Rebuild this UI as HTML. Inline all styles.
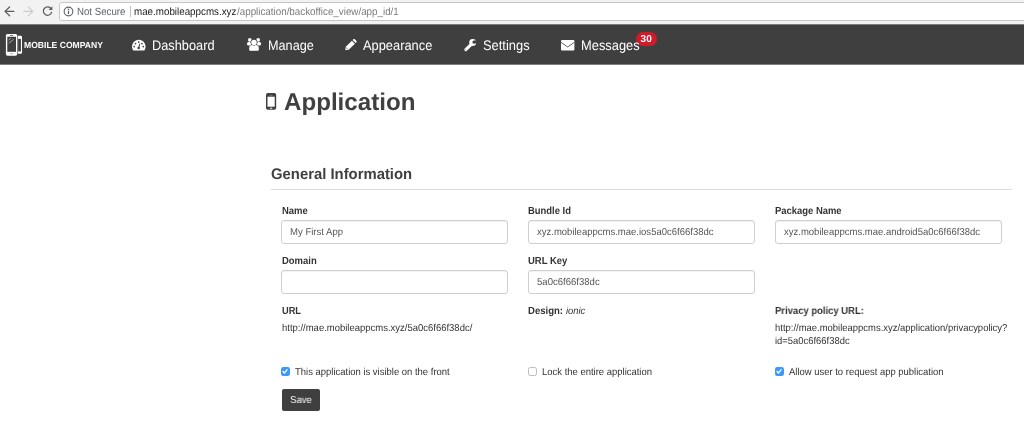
<!DOCTYPE html>
<html><head><meta charset="utf-8"><title>Application</title>
<style>
*{box-sizing:border-box;margin:0;padding:0}
html,body{width:1024px;height:435px;overflow:hidden;background:#fff;font-family:"Liberation Sans",sans-serif;color:#333}
.x{text-rendering:geometricPrecision;position:absolute;white-space:nowrap;line-height:1;transform-origin:0 0;font-family:"Liberation Sans",sans-serif}
#chrome{position:absolute;left:0;top:0;width:1024px;height:25px;background:#f2f2f2;border-bottom:1px solid #7c7c7c}
#urlbox{position:absolute;left:59px;top:2px;width:980px;height:18.500px;background:#fff;border:1px solid #c6c6c6;border-radius:3px}
#nav{position:absolute;left:0;top:25px;width:1024px;height:40px;background:#3f3f3f;border-bottom:1px solid #7e7e7e}
.badge{position:absolute;left:636.200px;top:31.800px;width:20.400px;height:14.100px;border-radius:7.050px;background:#cf1b2b}
#hr{position:absolute;left:271px;top:189px;width:741px;height:1px;background:#dcdcdc}
.inp{position:absolute;width:227px;height:24px;border:1px solid #cfcfcf;border-radius:3px;background:#fff;box-shadow:inset 0 1px 1px rgba(0,0,0,.06)}
.cb{position:absolute;width:8.600px;height:8.600px;border-radius:2.300px;top:367px}
.cb.on{background:#3b99fb}
.cb.off{background:#fff;border:1px solid #bcbcbc}
#save{position:absolute;left:282px;top:388.900px;width:38px;height:21.700px;border-radius:2px;background:#3f3f3f}
svg{position:absolute;overflow:visible}
#all{position:absolute;left:0;top:0;width:1024px;height:435px;will-change:transform;overflow:hidden}
</style></head><body><div id="all">
<div id="chrome"><div id="urlbox"></div></div>
<svg style="left:0;top:0" width="60" height="24" viewBox="0 0 60 24" fill="none" stroke-linecap="round" stroke-linejoin="round">
<path d="M13.800 11.400H5.200M9.600 7L5 11.400L9.600 15.800" stroke="#5c5c5c" stroke-width="1.250"/>
<path d="M23.800 11.400H32.600M28.200 7L32.800 11.400L28.200 15.800" stroke="#cbcbcb" stroke-width="1.150"/>
<path d="M51 8.600A4.200 4.200 0 1 0 51.600 12.300" stroke="#5c5c5c" stroke-width="1.250"/>
<path d="M52.300 6.300V9.900H48.700Z" fill="#5c5c5c" stroke="none"/>
</svg>
<svg style="left:63.400px;top:5.900px" width="11" height="11" viewBox="0 0 11 11"><circle cx="5.500" cy="5.500" r="4.350" fill="none" stroke="#5f6368" stroke-width="1.100"/><rect x="4.850" y="4.700" width="1.300" height="3.400" fill="#5f6368"/><rect x="4.850" y="2.700" width="1.300" height="1.300" fill="#5f6368"/></svg>
<div style="position:absolute;left:130px;top:6px;width:1px;height:11px;background:#c4c4c4"></div>
<div id="nav"></div>
<svg style="left:0;top:28px" width="30" height="34" viewBox="0 28 30 34">
<rect x="13" y="35.800" width="9" height="18" rx="1.300" fill="#fff"/>
<rect x="18.100" y="38.900" width="2.800" height="12.500" fill="#3f3f3f"/>
<rect x="5.300" y="33.300" width="12.500" height="23" rx="2" fill="#3f3f3f"/>
<rect x="5.900" y="33.900" width="11.300" height="21.800" rx="1.600" fill="#fff"/>
<rect x="7.300" y="36.750" width="8.700" height="15.050" fill="#3f3f3f"/>
<rect x="9.800" y="35.200" width="3.500" height="0.700" rx="0.300" fill="#555"/>
<rect x="10.200" y="53" width="2.700" height="1.200" rx="0.500" fill="#bbb"/>
<path d="M8.600 40.100L10.900 38.200M8.750 43.200L13.700 39.300" stroke="#fff" stroke-width="0.550" fill="none"/>
</svg>
<svg style="left:132.100px;top:39.800px" width="13.600" height="10.400" viewBox="0 0 13.600 10.400"><path d="M1.500 10.400A0.700 0.700 0 0 1 0.900 10A6.800 6.800 0 1 1 12.700 10A0.700 0.700 0 0 1 12.100 10.400Z" fill="#fff"/><circle cx="2.200" cy="6.600" r="0.850" fill="#3f3f3f"/><circle cx="3.500" cy="3.600" r="0.850" fill="#3f3f3f"/><circle cx="6.700" cy="2.100" r="0.850" fill="#3f3f3f"/><circle cx="10" cy="3.600" r="0.850" fill="#3f3f3f"/><circle cx="11.300" cy="6.600" r="0.850" fill="#3f3f3f"/><path d="M7.700 4.100L6.800 7.800" stroke="#3f3f3f" stroke-width="1" stroke-linecap="round"/><circle cx="6.650" cy="7.950" r="1.200" fill="#3f3f3f"/></svg>
<svg style="left:246.600px;top:38.300px" width="14.100" height="12.900" viewBox="0 0 14.100 12.900" fill="#fff"><circle cx="2.800" cy="1.850" r="1.850"/><circle cx="11.200" cy="1.850" r="1.850"/><rect x="0" y="3.900" width="4.200" height="3.700" rx="1.600"/><rect x="9.900" y="3.900" width="4.200" height="3.700" rx="1.600"/><circle cx="7" cy="4.550" r="3.350" fill="#3f3f3f"/><path d="M2 11.400V10.100A3.300 3.300 0 0 1 5.300 6.800H8.700A3.300 3.300 0 0 1 12 10.100V11.400A1.500 1.500 0 0 1 10.500 12.900H3.500A1.500 1.500 0 0 1 2 11.400Z" stroke="#3f3f3f" stroke-width="0.350"/><circle cx="7" cy="4.450" r="3.050" fill="#3f3f3f"/><circle cx="7" cy="4.450" r="2.750"/></svg>
<svg style="left:344.800px;top:39.100px" width="11.700" height="11.300" viewBox="0 0 11.700 11.300" fill="#fff"><path d="M0.150 11.250L0.800 7.800L6.900 1.700L9.900 4.700L3.700 10.700Z"/><path d="M7.550 1.050L8.300 0.350A1.100 1.100 0 0 1 9.850 0.350L11.350 1.850A1.100 1.100 0 0 1 11.350 3.400L10.600 4.100Z"/><path d="M1.300 8.500L2.900 10.100" stroke="#3f3f3f" stroke-width="0.500"/><path d="M0.700 10.700L1.600 9.800" stroke="#3f3f3f" stroke-width="0.600"/></svg>
<svg style="left:464.100px;top:38.800px" width="12.100" height="12.400" viewBox="0 0 12.100 12.400"><path d="M7.800 4.900L1.800 10.700" stroke="#fff" stroke-width="3" stroke-linecap="round"/><circle cx="8.700" cy="3.550" r="3.450" fill="#fff"/><circle cx="10" cy="3.100" r="1.600" fill="#3f3f3f"/><path d="M10 3.100L14 2.300" stroke="#3f3f3f" stroke-width="2.900"/><circle cx="1.800" cy="10.700" r="0.450" fill="#3f3f3f"/></svg>
<svg style="left:560.800px;top:39.800px" width="13.400" height="10.600" viewBox="0 0 13.400 10.600"><rect x="0" y="0" width="13.400" height="10.600" rx="1.100" fill="#fff"/><path d="M0 2.300L6.700 7L13.400 2.300" stroke="#3f3f3f" stroke-width="0.800" fill="none"/></svg>
<div class="badge"></div>
<span class="x" style="left:640.400px;top:35.400px;font-size:10px;font-weight:bold;color:#fff;letter-spacing:0.200px">30</span>
<svg style="left:266px;top:93.300px" width="10.200" height="16.700" viewBox="0 0 10.200 16.700"><rect x="0" y="0" width="10.200" height="16.700" rx="1.900" fill="#404040"/><rect x="1.500" y="3.700" width="7.200" height="10" fill="#fff"/><rect x="3.800" y="1.900" width="2.600" height="0.600" fill="#9a9a9a"/><rect x="3.900" y="14.700" width="2.400" height="1.100" rx="0.500" fill="#fff"/></svg>
<div id="hr"></div>
<div class="inp" style="left:281px;top:220px"></div>
<div class="inp" style="left:528px;top:220px"></div>
<div class="inp" style="left:775px;top:220px"></div>
<div class="inp" style="left:281px;top:270px"></div>
<div class="inp" style="left:528px;top:270px"></div>
<div class="cb on" style="left:281.150px"></div>
<div class="cb off" style="left:528.050px"></div>
<div class="cb on" style="left:775.150px"></div>
<svg style="left:281.150px;top:367px" width="8.600" height="8.600" viewBox="0 0 8.600 8.600" fill="none" stroke="#fff" stroke-width="1.350" stroke-linecap="round" stroke-linejoin="round"><path d="M2.050 4.500L3.400 6L6.150 2.650"/></svg>
<svg style="left:775.150px;top:367px" width="8.600" height="8.600" viewBox="0 0 8.600 8.600" fill="none" stroke="#fff" stroke-width="1.350" stroke-linecap="round" stroke-linejoin="round"><path d="M2.050 4.500L3.400 6L6.150 2.650"/></svg>
<div id="save"></div>
<span class="x" style="left:77.35px;top:6.91px;font-size:10.5px;font-weight:normal;color:#5f6368;font-style:normal;transform:scaleX(0.9214)">Not Secure</span>
<span class="x" style="left:134.35px;top:6.91px;font-size:10.5px;font-weight:normal;color:#1a1a1a;font-style:normal;transform:scaleX(0.9333)">mae.mobileappcms.xyz</span>
<span class="x" style="left:236.75px;top:6.91px;font-size:10.5px;font-weight:normal;color:#7a7a7a;font-style:normal;transform:scaleX(0.9342)">/application/backoffice_view/app_id/1</span>
<span class="x" style="left:24.45px;top:40.75px;font-size:8.8px;font-weight:bold;color:#fff;font-style:normal;transform:scaleX(0.9745)">MOBILE COMPANY</span>
<span class="x" style="left:152.25px;top:38.93px;font-size:13.9px;font-weight:normal;color:#fff;font-style:normal;transform:scaleX(0.9195)">Dashboard</span>
<span class="x" style="left:267.55px;top:38.93px;font-size:13.9px;font-weight:normal;color:#fff;font-style:normal;transform:scaleX(0.9123)">Manage</span>
<span class="x" style="left:363.15px;top:38.93px;font-size:13.9px;font-weight:normal;color:#fff;font-style:normal;transform:scaleX(0.9250)">Appearance</span>
<span class="x" style="left:483.05px;top:38.93px;font-size:13.9px;font-weight:normal;color:#fff;font-style:normal;transform:scaleX(0.9282)">Settings</span>
<span class="x" style="left:581.00px;top:38.93px;font-size:13.9px;font-weight:normal;color:#fff;font-style:normal;transform:scaleX(0.9264)">Messages</span>
<span class="x" style="left:283.55px;top:90.93px;font-size:24.3px;font-weight:bold;color:#404040;font-style:normal;transform:scaleX(0.9933)">Application</span>
<span class="x" style="left:271.15px;top:167.05px;font-size:15.3px;font-weight:bold;color:#404040;font-style:normal;transform:scaleX(0.9708)">General Information</span>
<span class="x" style="left:281.75px;top:207.28px;font-size:10.3px;font-weight:bold;color:#333;font-style:normal;transform:scaleX(0.9199)">Name</span>
<span class="x" style="left:528.45px;top:207.28px;font-size:10.3px;font-weight:bold;color:#333;font-style:normal;transform:scaleX(0.9146)">Bundle Id</span>
<span class="x" style="left:775.15px;top:207.28px;font-size:10.3px;font-weight:bold;color:#333;font-style:normal;transform:scaleX(0.9161)">Package Name</span>
<span class="x" style="left:281.55px;top:257.28px;font-size:10.3px;font-weight:bold;color:#333;font-style:normal;transform:scaleX(0.9188)">Domain</span>
<span class="x" style="left:528.45px;top:257.28px;font-size:10.3px;font-weight:bold;color:#333;font-style:normal;transform:scaleX(0.9196)">URL Key</span>
<span class="x" style="left:281.75px;top:307.28px;font-size:10.3px;font-weight:bold;color:#333;font-style:normal;transform:scaleX(0.8974)">URL</span>
<span class="x" style="left:528.25px;top:307.28px;font-size:10.3px;font-weight:bold;color:#333;font-style:normal;transform:scaleX(0.9268)">Design:</span>
<span class="x" style="left:566.25px;top:306.54px;font-size:10px;font-weight:normal;color:#333;font-style:italic;transform:scaleX(0.9379)">ionic</span>
<span class="x" style="left:775.15px;top:307.28px;font-size:10.3px;font-weight:bold;color:#333;font-style:normal;transform:scaleX(0.9192)">Privacy policy URL:</span>
<span class="x" style="left:290.45px;top:228.23px;font-size:10px;font-weight:normal;color:#555;font-style:normal;transform:scaleX(0.9554)">My First App</span>
<span class="x" style="left:536.55px;top:228.23px;font-size:10px;font-weight:normal;color:#555;font-style:normal;transform:scaleX(0.9507)">xyz.mobileappcms.mae.ios5a0c6f66f38dc</span>
<span class="x" style="left:783.55px;top:228.23px;font-size:10px;font-weight:normal;color:#555;font-style:normal;transform:scaleX(0.9504)">xyz.mobileappcms.mae.android5a0c6f66f38dc</span>
<span class="x" style="left:536.55px;top:278.34px;font-size:10px;font-weight:normal;color:#555;font-style:normal;transform:scaleX(0.9554)">5a0c6f66f38dc</span>
<span class="x" style="left:281.75px;top:324.34px;font-size:10px;font-weight:normal;color:#333;font-style:normal;transform:scaleX(0.9483)">http://mae.mobileappcms.xyz/5a0c6f66f38dc/</span>
<span class="x" style="left:775.15px;top:324.34px;font-size:10px;font-weight:normal;color:#333;font-style:normal;transform:scaleX(0.9456)">http://mae.mobileappcms.xyz/application/privacypolicy?</span>
<span class="x" style="left:775.15px;top:337.44px;font-size:10px;font-weight:normal;color:#333;font-style:normal;transform:scaleX(0.9415)">id=5a0c6f66f38dc</span>
<span class="x" style="left:295.45px;top:368.44px;font-size:10px;font-weight:normal;color:#333;font-style:normal;transform:scaleX(0.9466)">This application is visible on the front</span>
<span class="x" style="left:541.95px;top:368.44px;font-size:10px;font-weight:normal;color:#333;font-style:normal;transform:scaleX(0.9467)">Lock the entire application</span>
<span class="x" style="left:788.75px;top:368.44px;font-size:10px;font-weight:normal;color:#333;font-style:normal;transform:scaleX(0.9453)">Allow user to request app publication</span>
<span class="x" style="left:290.25px;top:396.44px;font-size:10px;font-weight:normal;color:#fff;font-style:normal;transform:scaleX(0.9607)">Save</span>
</div></body></html>
